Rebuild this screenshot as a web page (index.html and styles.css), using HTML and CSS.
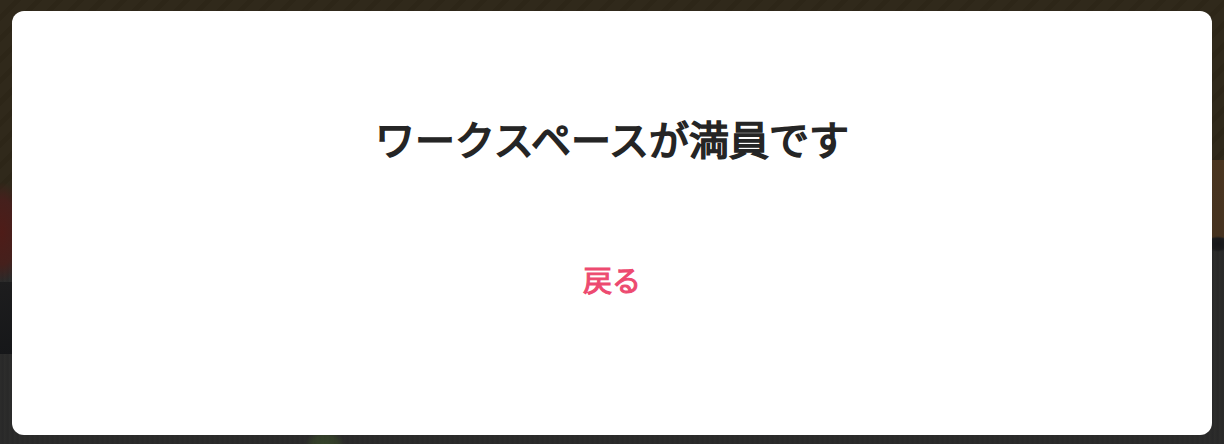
FILE: index.html
```html
<!DOCTYPE html>
<html lang="ja">
<head>
<meta charset="utf-8">
<title>ワークスペースが満員です</title>
<link rel="stylesheet" href="styles.css">
</head>
<body>
<main class="card">
<h1 class="title">ワークスペースが満員です</h1>
<button class="back" type="button">戻る</button>
</main>
</body>
</html>
```
FILE: styles.css
```css
html, body {
  margin: 0;
  height: 100%;
}
body {
  box-sizing: border-box;
  width: 1224px;
  height: 444px;
  overflow: hidden;
  padding: 11px 12px 9px;
  background-color: #2b2b2a;
  background-image:
    radial-gradient(ellipse 20px 14px at 325px 444px, #35432a 0, #323c29 60%, transparent 100%),
    radial-gradient(ellipse 12px 8px at 1218px 244px, #17181a 0, #1c1c1d 70%, transparent 100%),
    linear-gradient(#4a3520, #45321f),
    radial-gradient(ellipse 24px 50px at 2px 232px, #4e1c18 0, #45201c 65%, transparent 100%),
    linear-gradient(168deg, #1d1d1e, #161719),
    repeating-linear-gradient(135deg, #30291b 0, #30291b 10px, #2d2618 10px, #2d2618 15px),
    repeating-linear-gradient(90deg, #2c2c2b 0, #282828 3px, #2e2e2d 5px);
  background-repeat: no-repeat;
  background-position:
    0 0,
    0 0,
    1212px 160px,
    0 0,
    0 282px,
    0 0,
    0 0;
  background-size:
    100% 100%,
    100% 100%,
    12px 78px,
    100% 100%,
    12px 72px,
    100% 238px,
    100% 100%;
  font-family: "Noto Sans CJK JP", "Noto Sans", sans-serif;
}
.card {
  box-sizing: border-box;
  height: 424px;
  padding-top: 102px;
  background: #fff;
  border-radius: 12px;
  display: flex;
  flex-direction: column;
  align-items: center;
}
.title {
  margin: 0;
  font-size: 40px;
  line-height: 50px;
  font-weight: 400;
  -webkit-text-stroke: 1.7px #252525;
  color: #252525;
}
.back {
  margin-top: 96px;
  padding: 0;
  border: 0;
  background: none;
  font-family: inherit;
  font-size: 29px;
  line-height: 40px;
  font-weight: 400;
  -webkit-text-stroke: 1.1px #ed4a70;
  color: #ed4a70;
}
```
